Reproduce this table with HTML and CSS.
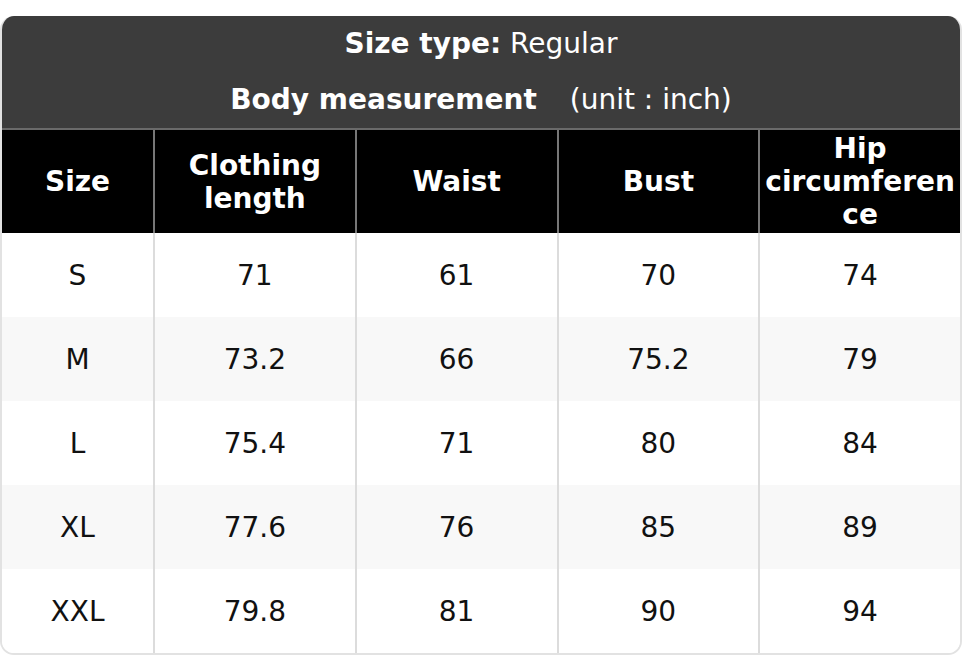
FILE: index.html
```html
<!DOCTYPE html>
<html lang="en">
<head>
<meta charset="utf-8">
<title>Size chart</title>
<link rel="stylesheet" href="styles.css">
</head>
<body>
<div class="chart">
  <div class="chart-head">
    <div class="head-line"><b>Size type:</b> Regular</div>
    <div class="head-line second"><b>Body measurement</b><span class="unit">(unit : inch)</span></div>
  </div>
  <div class="row row-head">
    <div class="cell">Size</div>
    <div class="cell">Clothing length</div>
    <div class="cell">Waist</div>
    <div class="cell">Bust</div>
    <div class="cell">Hip circumference</div>
  </div>
  <div class="row">
    <div class="cell">S</div><div class="cell">71</div><div class="cell">61</div><div class="cell">70</div><div class="cell">74</div>
  </div>
  <div class="row alt">
    <div class="cell">M</div><div class="cell">73.2</div><div class="cell">66</div><div class="cell">75.2</div><div class="cell">79</div>
  </div>
  <div class="row">
    <div class="cell">L</div><div class="cell">75.4</div><div class="cell">71</div><div class="cell">80</div><div class="cell">84</div>
  </div>
  <div class="row alt">
    <div class="cell">XL</div><div class="cell">77.6</div><div class="cell">76</div><div class="cell">85</div><div class="cell">89</div>
  </div>
  <div class="row">
    <div class="cell">XXL</div><div class="cell">79.8</div><div class="cell">81</div><div class="cell">90</div><div class="cell">94</div>
  </div>
</div>
</body>
</html>
```

FILE: styles.css
```css
* { box-sizing: border-box; }
html, body { margin: 0; padding: 0; background: #fff; }
body {
  font-family: "DejaVu Sans", "Liberation Sans", sans-serif;
  font-size: 28px;
  color: #111;
}
.chart {
  margin-top: 16px;
  width: 962px;
  border: 2px solid #e2e2e2;
  border-top: none;
  border-radius: 14px;
  overflow: hidden;
}
.chart-head {
  background: #3c3c3c;
  color: #fff;
  text-align: center;
  border-bottom: 2px solid #6a6a6a;
  margin: 0 -2px;
}
.head-line {
  height: 56px;
  line-height: 55px;
  white-space: nowrap;
}
.head-line.second { line-height: 56px; }
.head-line b { font-weight: bold; }
.unit { margin-left: 33px; }
.row {
  display: grid;
  grid-template-columns: 151px 1fr 1fr 1fr 1fr;
  height: 84px;
  background: #fff;
}
.row.alt { background: #f8f8f8; }
.cell {
  display: flex;
  align-items: center;
  justify-content: center;
  text-align: center;
  padding: 0 4px;
  border-left: 2px solid #dcdcdc;
}
.cell:first-child { border-left: none; }
.row-head {
  height: 103px;
  background: #000;
  color: #fff;
  font-weight: bold;
  line-height: 33px;
  margin: 0 -2px;
  padding: 0 2px;
}
.row-head .cell {
  border-left-color: #777;
  overflow-wrap: anywhere;
  word-break: break-word;
}
.row-head .cell:first-child { border-left: none; }
```
